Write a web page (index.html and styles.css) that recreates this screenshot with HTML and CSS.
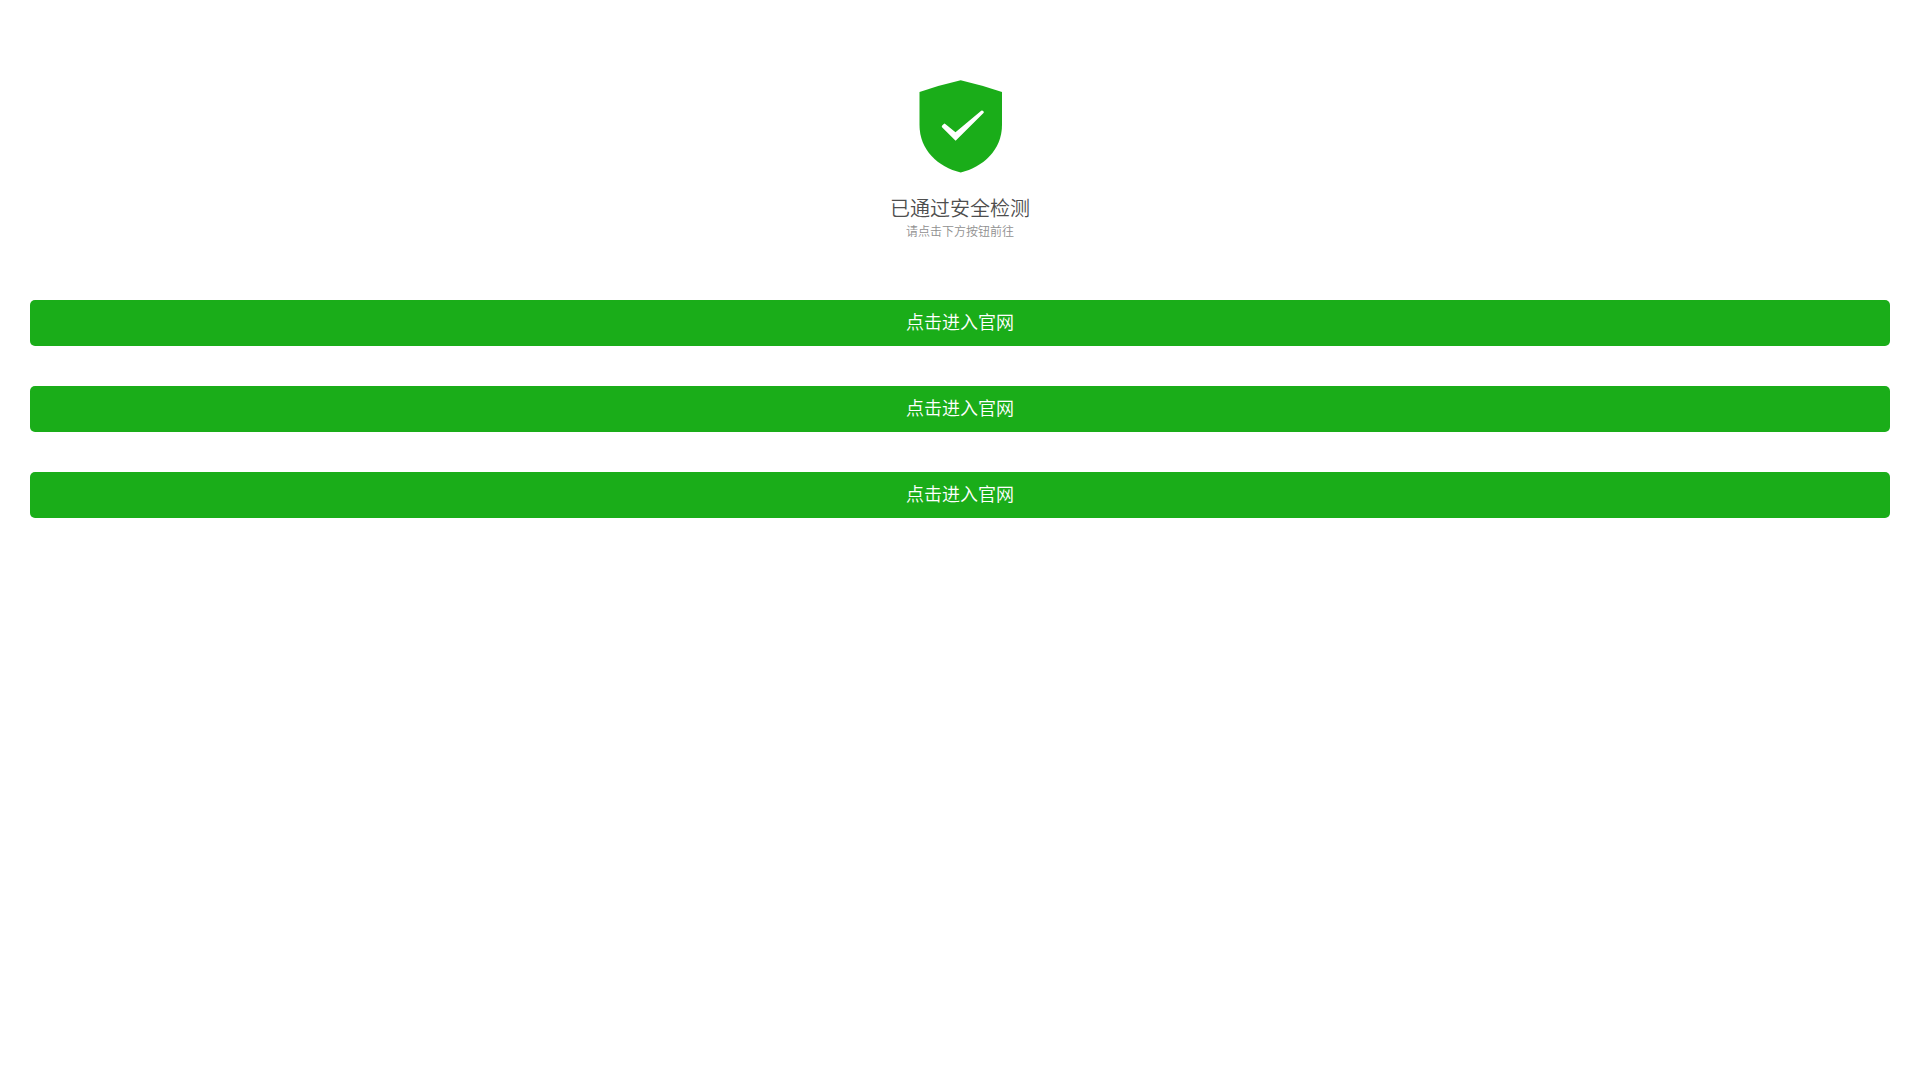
FILE: index.html
```html
<!DOCTYPE html>
<html lang="zh-CN">
<head>
    <meta charset="UTF-8">
    <meta name="viewport" content="width=device-width, initial-scale=1.0">
    <title>已通过安全检测</title>
    <link rel="stylesheet" href="styles.css">
</head>
<body>
    <main class="page">
        <!-- Check result -->
        <header class="result">
            <svg class="shield" viewBox="0 0 84 93" aria-hidden="true">
                <path fill="#1aad19" d="M42.7 0.3 Q63 5 84 12 V45 C84 70 65 87 42.7 92.5 C20 87 1.5 70 1.5 45 V12 Q22 5 42.7 0.3 Z"/>
                <path fill="#fff" d="M24 47.2 Q23.4 46.4 24.2 45.6 L25.8 43.9 Q26.5 43.3 27.3 43.9 L37.5 52.2 L63.2 30.7 Q64 30.1 64.8 30.8 L65.6 31.6 Q66.2 32.3 65.5 33 L37.6 60.8 Z"/>
            </svg>
            <h1 class="title">已通过安全检测</h1>
            <p class="desc">请点击下方按钮前往</p>
        </header>

        <!-- Entry links -->
        <nav class="links">
            <a class="btn" href="#">点击进入官网</a>
            <a class="btn" href="#">点击进入官网</a>
            <a class="btn" href="#">点击进入官网</a>
        </nav>
    </main>
</body>
</html>
```

FILE: styles.css
```css
body {
    margin: 0;
    background-color: #fff;
    font-family: "Liberation Sans", "Noto Sans CJK SC", sans-serif;
    font-weight: 350;
}
.page {
    padding: 80px 30px;
}
.result {
    text-align: center;
}
.shield {
    display: block;
    width: 84px;
    height: 93px;
    margin: 0 auto 22px;
}
.title {
    margin: 0;
    font-size: 20px;
    font-weight: 350;
    line-height: 28px;
    color: #4e4e4e;
}
.desc {
    margin: 0;
    font-size: 12px;
    line-height: 18px;
    color: #909090;
}
.links {
    display: flex;
    flex-direction: column;
    gap: 40px;
    margin-top: 59px;
}
.btn {
    border-radius: 5px;
    background-color: #1aad19;
    color: #fff;
    font-size: 18px;
    line-height: 46px;
    text-align: center;
    text-decoration: none;
}
.btn:active {
    background-color: #179b16;
}
```
